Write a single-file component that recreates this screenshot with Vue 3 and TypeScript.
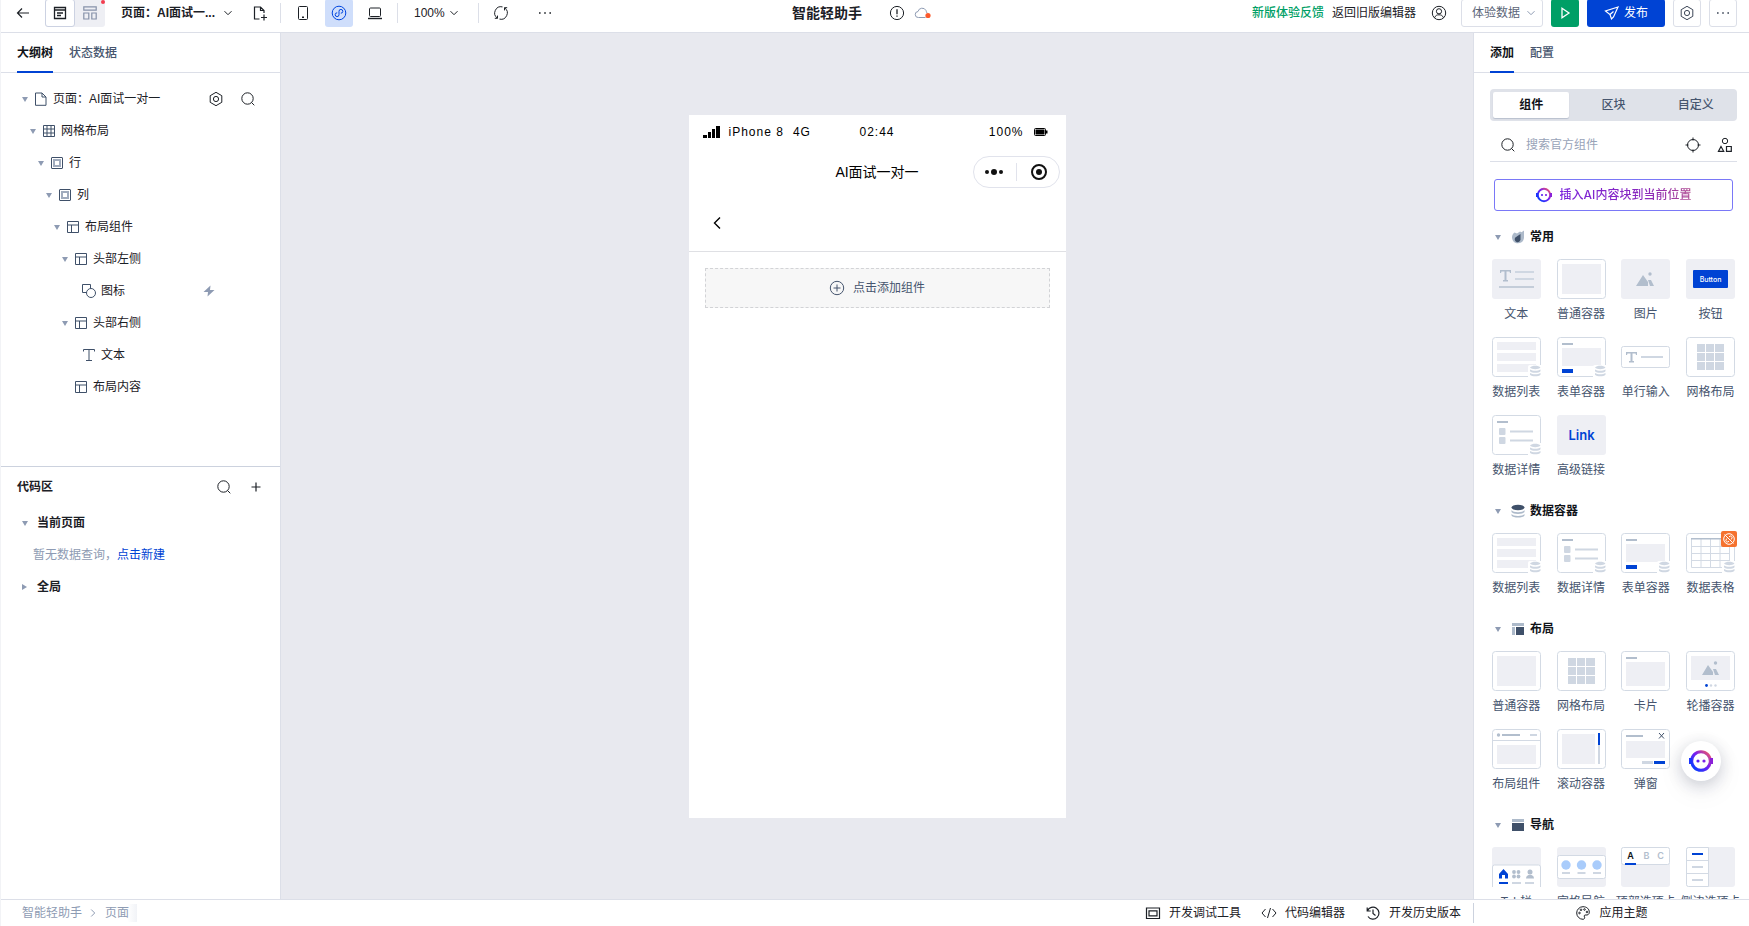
<script setup lang="ts">
import { ref } from 'vue'

interface TreeNode {
  label: string
  depth: number
  icon: string
  open: boolean
  event?: boolean
}

interface Item {
  label: string
  kind: string
  db?: boolean
  badge?: boolean
}

interface Section {
  title: string
  icon: string
  items: Item[]
}

const keyword = ref('')

const tree: TreeNode[] = [
  { label: '页面：AI面试一对一', depth: 0, icon: 'file', open: true },
  { label: '网格布局', depth: 1, icon: 'grid', open: true },
  { label: '行', depth: 2, icon: 'box', open: true },
  { label: '列', depth: 3, icon: 'box', open: true },
  { label: '布局组件', depth: 4, icon: 'layout', open: true },
  { label: '头部左侧', depth: 5, icon: 'layout', open: true },
  { label: '图标', depth: 6, icon: 'shape', open: false, event: true },
  { label: '头部右侧', depth: 5, icon: 'layout', open: true },
  { label: '文本', depth: 6, icon: 'text', open: false },
  { label: '布局内容', depth: 5, icon: 'layout', open: false },
]

const sections: Section[] = [
  {
    title: '常用',
    icon: 'drop',
    items: [
      { label: '文本', kind: 'text' },
      { label: '普通容器', kind: 'container' },
      { label: '图片', kind: 'image' },
      { label: '按钮', kind: 'button' },
      { label: '数据列表', kind: 'list', db: true },
      { label: '表单容器', kind: 'form', db: true },
      { label: '单行输入', kind: 'input' },
      { label: '网格布局', kind: 'grid' },
      { label: '数据详情', kind: 'detail', db: true },
      { label: '高级链接', kind: 'link' },
    ],
  },
  {
    title: '数据容器',
    icon: 'data',
    items: [
      { label: '数据列表', kind: 'list', db: true },
      { label: '数据详情', kind: 'detail', db: true },
      { label: '表单容器', kind: 'form', db: true },
      { label: '数据表格', kind: 'table', db: true, badge: true },
    ],
  },
  {
    title: '布局',
    icon: 'layout',
    items: [
      { label: '普通容器', kind: 'container' },
      { label: '网格布局', kind: 'grid' },
      { label: '卡片', kind: 'card' },
      { label: '轮播容器', kind: 'carousel' },
      { label: '布局组件', kind: 'header' },
      { label: '滚动容器', kind: 'scroll' },
      { label: '弹窗', kind: 'modal' },
    ],
  },
  {
    title: '导航',
    icon: 'nav',
    items: [
      { label: 'Tab栏', kind: 'tabbar' },
      { label: '宫格导航', kind: 'gridnav' },
      { label: '顶部选项卡', kind: 'toptab' },
      { label: '侧边选项卡', kind: 'sidetab' },
    ],
  },
]

const plainKinds = ['text', 'image', 'button', 'input', 'link', 'tabbar', 'gridnav', 'toptab', 'sidetab']
const filledKinds = ['text', 'image', 'button', 'link', 'tabbar', 'gridnav', 'toptab', 'sidetab']
const three = [0, 1, 2]
</script>

<template>
  <div class="app">
    <svg class="defs" aria-hidden="true">
      <defs>
        <linearGradient id="brand" x1="0" y1="1" x2="1" y2="0">
          <stop offset="0.15" stop-color="#0a3cff" />
          <stop offset="0.55" stop-color="#7a1ff0" />
          <stop offset="0.85" stop-color="#e0507a" />
        </linearGradient>
        <symbol id="search" viewBox="0 0 16 16">
          <circle cx="7.5" cy="7.5" r="5.7" /><path d="M11.5 11.5 14.300 14.300" />
        </symbol>
        <symbol id="gear" viewBox="0 0 16 16">
          <path d="M8 1.300 13.800 4.700V11.300L8 14.700 2.200 11.300V4.700Z" /><circle cx="8" cy="8" r="2.6" />
        </symbol>
        <symbol id="dots" viewBox="0 0 16 16">
          <path d="M2 7.200h1.600v1.600H2zM7.200 7.200h1.600v1.600H7.200zM12.400 7.200H14v1.600h-1.600z" fill="currentColor" stroke="none" />
        </symbol>
        <symbol id="chevron" viewBox="0 0 10 10"><path d="M1.500 3.200 5 6.700 8.500 3.200" /></symbol>
        <symbol id="robot" viewBox="0 0 24 24">
          <path d="M12 1.200A10.800 10.800 0 1 0 12 22.800 10.800 10.800 0 0 0 12 1.200ZM12 4.200A7.800 7.800 0 1 1 12 19.800 7.800 7.800 0 0 1 12 4.200Z" fill="url(#brand)" fill-rule="evenodd" stroke="none" />
          <path d="M0 9h3v6H0z" fill="#1a35ff" stroke="none" /><path d="M21 9h3v6h-3z" fill="#8a20d8" stroke="none" />
          <circle cx="9" cy="12" r="1.600" fill="#5a20f0" stroke="none" /><circle cx="15" cy="12" r="1.600" fill="#7a20e8" stroke="none" />
        </symbol>
      </defs>
    </svg>

    <header class="topbar">
      <div class="top-left">
        <button class="icon-btn back" aria-label="返回"><svg class="i16" viewBox="0 0 16 16"><path d="M14 8H2.500M7 3.500 2.500 8 7 12.500" stroke-width="1.200" /></svg></button>
        <div class="toggle">
          <button class="on" aria-label="编辑"><svg class="i16" viewBox="0 0 16 16"><path d="M2.500 2.500h11v11h-11zM2.500 5h11M5 8h6M5 10.500h4" stroke-width="1.300" /></svg></button>
          <button aria-label="布局"><svg class="i16" viewBox="0 0 16 16"><path d="M1.800 1.800h12.400v3.400H1.800zM1.800 8h5v6h-5zM9.800 8h4.400v6H9.800z" stroke-width="1.200" /></svg></button>
          <i class="red-dot"></i>
        </div>
        <button class="page-name">页面：AI面试一...<svg class="i10" ><use href="#chevron" /></svg></button>
        <button class="icon-btn newfile" aria-label="新建页面"><svg class="i16" viewBox="0 0 16 16"><path d="M7.500 14H2.500V2h6l3.500 3.500V8M8.500 2v3.500H12M12 9.500v6M9 12.500h6" stroke-width="1.200" /></svg></button>
        <i class="vsep"></i>
        <div class="devices">
          <button aria-label="手机"><svg class="i16" viewBox="0 0 16 16"><rect x="3.500" y="1.500" width="9" height="13" rx="1" /><path d="M7 12.300h2" stroke-width="1.400" /></svg></button>
          <button class="on" aria-label="小程序"><svg class="i16" viewBox="0 0 16 16"><circle cx="8" cy="8" r="6.800" /><path d="M6.200 7.800A1.900 1.900 0 1 0 8 9.700V6.300A1.900 1.900 0 1 1 9.800 8.200" /></svg></button>
          <button aria-label="电脑"><svg class="i16" viewBox="0 0 16 16"><rect x="2.500" y="3" width="11" height="8.500" rx="1" /><path d="M1 13.500h14" stroke-width="1.400" /></svg></button>
        </div>
        <i class="vsep"></i>
        <label class="zoom"><select aria-label="缩放"><option>100%</option></select><svg class="i10"><use href="#chevron" /></svg></label>
        <i class="vsep"></i>
        <button class="icon-btn refresh" aria-label="刷新"><svg class="i16" viewBox="0 0 16 16"><path d="M4.300 13.100A6.300 6.300 0 0 1 9.500 1.900M11.700 2.900A6.300 6.300 0 0 1 6.500 14.100M1.800 13.300h2.700v-2.700M14.200 2.700h-2.700v2.700" /></svg></button>
        <button class="icon-btn" aria-label="更多"><svg class="i16"><use href="#dots" /></svg></button>
      </div>

      <div class="top-mid">
        <h1>智能轻助手</h1>
        <svg class="i16" viewBox="0 0 16 16"><circle cx="8" cy="8" r="6.600" /><path d="M8 4.300v4.900M8 10.500v1.300" stroke-width="1.300" /></svg>
        <svg class="cloud" viewBox="0 0 18 16"><path d="M11.500 12.500H4.500a3 3 0 0 1-.5-6A4.300 4.300 0 0 1 12 5.500c.4 1 .4 1.500 1 2.500" /><circle cx="14" cy="10.500" r="2.600" class="dot" /></svg>
      </div>

      <div class="top-right">
        <a href="#" class="green">新版体验反馈</a>
        <a href="#" class="old">返回旧版编辑器</a>
        <svg class="i16 user" viewBox="0 0 16 16"><circle cx="8" cy="8" r="6.700" /><circle cx="8" cy="6.300" r="2.600" /><path d="M3.500 12.800C4.500 10.300 6 9.800 8 9.800s3.500.5 4.500 3" /></svg>
        <label class="data-select"><select aria-label="数据"><option>体验数据</option></select><svg class="i10"><use href="#chevron" /></svg></label>
        <button class="play" aria-label="预览"><svg class="i16" viewBox="0 0 16 16"><path d="M5 3.200 12 8 5 12.800Z" stroke-width="1.300" /></svg></button>
        <button class="publish"><svg class="i16" viewBox="0 0 16 16"><path d="M14 2 1.500 6 6 9.500 7.500 14 9.500 12 14 2ZM6 9.500 9.500 6.500" stroke-width="1.200" /></svg>发布</button>
        <button class="square" aria-label="设置"><svg class="i16"><use href="#gear" /></svg></button>
        <button class="square" aria-label="更多操作"><svg class="i16"><use href="#dots" /></svg></button>
      </div>
    </header>

    <main class="body">
      <aside class="left">
        <nav class="tabs"><button class="active">大纲树</button><button>状态数据</button></nav>
        <div class="outline">
          <ul>
            <li v-for="(n, k) in tree" :key="k" :style="{ paddingLeft: 20 + n.depth * 8 + 'px' }">
              <i class="caret" :class="{ none: !n.open }"></i>
              <svg class="i14" viewBox="0 0 14 14">
                <path v-if="n.icon === 'file'" d="M1.500 1H8l4 4v8.300H1.500zM8 1v4h4" />
                <path v-else-if="n.icon === 'grid'" d="M1.500 1.500h11v11h-11zM1.500 5h11M1.500 9h11M5 1.500v11M9 1.500v11" />
                <template v-else-if="n.icon === 'box'"><rect x="1.500" y="1.500" width="11" height="11" rx="0.500" /><rect x="4" y="4" width="6" height="6" class="soft" /></template>
                <path v-else-if="n.icon === 'layout'" d="M1.500 1.500h11v11h-11zM1.500 5h11M5.500 5v7.500" />
                <template v-else-if="n.icon === 'shape'"><path d="M4.500 8.500H.5v-8h8v4" /><circle cx="9" cy="9" r="4.500" /></template>
                <path v-else d="M1.500 3.500v-2h11v2M7 1.500v11M4 12.500h6" />
              </svg>
              <span>{{ n.label }}</span>
              <div v-if="k === 0" class="tools">
                <button aria-label="页面设置"><svg class="i16"><use href="#gear" /></svg></button>
                <button aria-label="搜索大纲"><svg class="i16"><use href="#search" /></svg></button>
              </div>
              <svg v-if="n.event" class="bolt" viewBox="0 0 12 12"><path d="M7.500.5.5 7H5L4.500 11.500 11.500 5H7Z" /></svg>
            </li>
          </ul>
        </div>
        <section class="code">
          <div class="code-head">
            <h2>代码区</h2>
            <div class="tools">
              <button aria-label="搜索代码"><svg class="i16"><use href="#search" /></svg></button>
              <button aria-label="新建代码"><svg class="i16" viewBox="0 0 16 16"><path d="M8 3.500v9M3.500 8h9" stroke-width="1.200" /></svg></button>
            </div>
          </div>
          <div class="code-row"><i class="caret"></i><strong>当前页面</strong></div>
          <p>暂无数据查询，<a href="#">点击新建</a></p>
          <div class="code-row"><i class="caret closed"></i><strong>全局</strong></div>
        </section>
      </aside>

      <section class="canvas">
        <div class="phone">
          <div class="status">
            <div class="carrier">
              <svg class="signal" viewBox="0 0 17 12"><path d="M0 9h4v3H0zM5 6h3v6H5zM9 3h3v9H9zM13 0h4v12h-4z" /></svg>
              <span>iPhone 8</span><span>4G</span>
            </div>
            <span>02:44</span>
            <div class="power"><span>100%</span><svg class="battery" viewBox="0 0 14 8"><rect x="0.500" y="0.500" width="11" height="7" rx="1" fill="none" stroke="#000" /><path d="M1.500 1.500h9v5h-9zM12 2.500h1.500v3H12z" /></svg></div>
          </div>
          <div class="navbar">
            <span></span>
            <h3>AI面试一对一</h3>
            <div class="capsule">
              <svg viewBox="0 0 20 20"><circle cx="3" cy="10" r="2" /><circle cx="10" cy="10" r="3" /><circle cx="17" cy="10" r="2" /></svg>
              <i></i>
              <svg viewBox="0 0 20 20"><circle cx="10" cy="10" r="7" fill="none" stroke="#111" stroke-width="2" /><circle cx="10" cy="10" r="3" /></svg>
            </div>
          </div>
          <div class="page-head"><button aria-label="后退"><svg class="i16" viewBox="0 0 16 16"><path d="M11 2.500 5.500 8l5.500 5.500" stroke-width="1.400" /></svg></button></div>
          <div class="page-body">
            <button class="add"><svg class="i16" viewBox="0 0 16 16"><circle cx="8" cy="8" r="6.700" /><path d="M8 4.500v7M4.500 8h7" /></svg>点击添加组件</button>
          </div>
        </div>
      </section>

      <aside class="right">
        <nav class="tabs"><button class="active">添加</button><button>配置</button></nav>
        <div class="segment"><button class="on">组件</button><button>区块</button><button>自定义</button></div>
        <div class="search">
          <label for="kw"><svg class="i16"><use href="#search" /></svg></label>
          <input id="kw" v-model="keyword" type="text" placeholder="搜索官方组件" />
          <button aria-label="定位"><svg class="i16" viewBox="0 0 16 16"><circle cx="8" cy="8" r="5.500" /><path d="M8 .5v3M8 12.500v3M.5 8h3M12.500 8h3" /></svg></button>
          <button aria-label="分类"><svg class="i16" viewBox="0 0 16 16"><circle cx="8" cy="4" r="2.700" /><path d="M1.500 14.300 4 9.500l2.700 4.800ZM9.500 9.500h4.800v4.800H9.500z" stroke-width="1.200" /></svg></button>
        </div>
        <button class="ai"><svg class="i16"><use href="#robot" /></svg><span>插入AI内容块到当前位置</span></button>

        <div class="library">
          <section v-for="s in sections" :key="s.title" class="group">
            <h2>
              <i class="caret"></i>
              <svg class="i14" viewBox="0 0 14 14">
                <template v-if="s.icon === 'drop'"><path d="M13 .5v7a6 6 0 1 1-9.500-5L6 3.500 9 1.500 10.500 2.200Z" fill="#adbaca" /><path d="M9.500 4V9.500a2.900 2.900 0 1 1-5.200-2Z" fill="#3f5069" /></template>
                <template v-else-if="s.icon === 'data'"><path d="M.5 6C2 9 12 9 13.500 6v2C12 10.500 2 10.500.5 8zM.5 10C2 12.500 12 12.500 13.500 10v1.500C12 14.200 2 14.200.5 11.500z" fill="#adbaca" /><ellipse cx="7" cy="3.500" rx="6.500" ry="2.800" fill="#3f5069" /></template>
                <template v-else-if="s.icon === 'layout'"><path d="M1 1h12v3H1zM1 5h3v8H1z" fill="#adbaca" /><path d="M5 5h8v8H5z" fill="#3f5069" /></template>
                <template v-else><path d="M1 1h12v3H1z" fill="#adbaca" /><path d="M1 5h12v8H1z" fill="#3f5069" /></template>
              </svg>
              {{ s.title }}
            </h2>
            <div class="items">
              <button v-for="it in s.items" :key="it.label" class="item">
                <span class="thumb">
                  <svg viewBox="0 0 49 40">
                    <rect v-if="filledKinds.includes(it.kind)" width="49" height="40" rx="3" class="pale" />
                    <rect v-if="!plainKinds.includes(it.kind)" x="0.500" y="0.500" width="48" height="39" rx="3" class="frame" />

                    <template v-if="it.kind === 'text'">
                      <path d="M8 14v-3h11v3h-1l-.5-1.500h-3V21H16v1.500h-5V21h1.500v-8.500h-3L9 14z" class="dark" /><path d="M23 12h19v2H23zM23 19h19v2H23z" class="mid" /><path d="M7 27h35v2H7z" class="dark2" />
                    </template>
                    <rect v-else-if="it.kind === 'container'" x="5" y="5" width="39" height="30" class="pale" />
                    <template v-else-if="it.kind === 'image'"><path d="M15 27 22 16l5 7v4zM27 21h3l3 6h-4z" class="dark" /><circle cx="29" cy="15" r="1.700" class="dark" /></template>
                    <template v-else-if="it.kind === 'button'"><rect x="7" y="11" width="35" height="18" rx="1" class="blue" /><text x="24.500" y="23" class="t-button">Button</text></template>
                    <path v-else-if="it.kind === 'list'" d="M5 5h39v8H5zM5 16h39v8H5zM5 27h39v8H5z" class="pale" />
                    <template v-else-if="it.kind === 'form'"><path d="M5 6h11v2H5z" class="dark" /><path d="M5 11h39v18H5z" class="pale" /><path d="M5 32h11v4H5z" class="blue" /></template>
                    <template v-else-if="it.kind === 'input'"><rect x="0.500" y="9.500" width="48" height="21" rx="2" class="frame" /><path d="M5 18v-3h11v3h-1l-.5-1.500h-3V24H13v1.500H8V24h1.500v-7.500h-3L6 18z" class="dark" /><path d="M20 19h22v2H20z" class="mid" /></template>
                    <path v-else-if="it.kind === 'grid'" d="M11 7h8v8h-8zM20 7h8v8h-8zM29 7h9v8h-9zM11 16h8v8h-8zM20 16h8v8h-8zM29 16h9v8h-9zM11 25h8v8h-8zM20 25h8v8h-8zM29 25h9v8h-9z" class="mid" />
                    <template v-else-if="it.kind === 'detail'"><path d="M5 6h11v2H5z" class="dark" /><rect x="7" y="13" width="6.500" height="7" rx="1" class="mid" /><rect x="7" y="22" width="6.500" height="7" rx="1" class="mid" /><path d="M18 15.500h23v2H18zM18 24.500h23v2H18z" class="mid" /></template>
                    <text v-else-if="it.kind === 'link'" x="24.500" y="25" class="t-link">Link</text>
                    <template v-else-if="it.kind === 'table'"><path d="M5.500 5.500h38v29h-38zM5.500 13.500h38M5.500 20.500h38M5.500 27.500h38M15 5.500v29M24.500 5.500v29M34 5.500v29" class="frame" /><path d="M5 5h39v1.500H5z" class="dark" /></template>
                    <template v-else-if="it.kind === 'card'"><path d="M5 6h11v2H5z" class="dark" /><path d="M5 11h39v24H5z" class="pale" /></template>
                    <template v-else-if="it.kind === 'carousel'"><path d="M5 5h39v24H5z" class="pale" /><path d="M16 24 22 14l5 7v3zM27 18h3l3 6h-4z" class="dark" /><circle cx="29.500" cy="12" r="1.700" class="dark" /><circle cx="20.500" cy="34.500" r="1.400" class="blue" /><circle cx="25" cy="34.500" r="1.200" class="mid" /><circle cx="29.500" cy="34.500" r="1.200" class="mid" /></template>
                    <template v-else-if="it.kind === 'header'"><path d="M.5 11.500h48" class="frame" /><circle cx="6.500" cy="6" r="1.700" class="dark" /><path d="M10 5h18v2H10z" class="dark" /><path d="M38 5h7v2h-7z" class="mid" /><path d="M5 16h39v19H5z" class="pale" /></template>
                    <template v-else-if="it.kind === 'scroll'"><path d="M5 5h33v30H5z" class="pale" /><path d="M41 5h2v30h-2z" class="mid" /><path d="M41 4h2v12h-2z" class="blue" /></template>
                    <template v-else-if="it.kind === 'modal'"><path d="M5 6h17v2H5z" class="dark" /><path d="M5 12h39v17H5z" class="pale" /><path d="M38 4l5 5.500M43 4l-5 5.500" class="close" /><path d="M21 32h11v3H21z" class="mid" /><path d="M33 32h11v3H33z" class="blue" /></template>
                    <template v-else-if="it.kind === 'tabbar'">
                      <path d="M.5 40V20a2 2 0 0 1 2-2h44a2 2 0 0 1 2 2v20" class="frame" /><path d="M7 27 11.500 22 16 27v4.500h-3V28h-3v3.500H7z" class="blue" />
                      <circle cx="22" cy="25" r="1.900" class="dark" /><circle cx="26.500" cy="25" r="1.900" class="dark" /><circle cx="22" cy="29.500" r="1.900" class="dark" /><circle cx="26.500" cy="29.500" r="1.900" class="dark" /><circle cx="38" cy="25" r="2.500" class="dark" /><path d="M34 31.500c0-5 8-5 8 0z" class="dark" />
                      <path d="M7 35h9v2H7z" class="blue" /><path d="M20 35h9v2h-9zM33 35h9v2h-9z" class="mid" />
                    </template>
                    <template v-else-if="it.kind === 'gridnav'"><rect x="0.500" y="8.500" width="48" height="23" rx="2" class="frame" /><g v-for="c in three" :key="c"><circle :cx="9 + c * 15.5" cy="18" r="4.700" class="sky" /><rect :x="5 + c * 15.5" y="25" width="8" height="2" class="mid" /></g></template>
                    <template v-else-if="it.kind === 'toptab'"><rect x="0.500" y="0.500" width="48" height="17" rx="2" class="frame" /><text x="9.500" y="12" class="t-tab t-on">A</text><text x="25.500" y="12" class="t-tab">B</text><text x="39.500" y="12" class="t-tab">C</text><path d="M4 16h11v2H4z" class="blue" /></template>
                    <template v-else><path d="M2.500.5h20v39h-20a2 2 0 0 1-2-2v-35a2 2 0 0 1 2-2zM.5 13.500h22M.5 26.500h22" class="frame" /><path d="M6 6h11v2H6z" class="blue" /><path d="M6 19h11v2H6zM6 32h11v2H6z" class="mid" /></template>

                    <template v-if="it.db"><path d="M36 40V30a2 2 0 0 1 2-2h11v12z" fill="#fff" /><path d="M38 30.500c2-2.500 8.500-2.500 10.500 0-2 2.300-8.500 2.300-10.500 0zM38 32.500c2.500 1.800 8 1.800 10.500 0v1.700c-2 2-8.500 2-10.500 0zM38 36c2.500 1.800 8 1.800 10.500 0v1.700c-2 2-8.500 2-10.500 0z" class="mid" /></template>
                  </svg>
                  <svg v-if="it.badge" class="badge" viewBox="0 0 16 16"><rect width="16" height="16" rx="2" /><circle cx="8" cy="8" r="5.300" /><path d="M3.500 3.500 12.500 12.500M8 5.800 9.500 5a1.400 1.400 0 0 1 1.500 2L10.200 8.500M5.800 7.500 5 9a1.400 1.400 0 0 0 1.500 2L8 10.200" /></svg>
                </span>
                <span class="name">{{ it.label }}</span>
              </button>
            </div>
          </section>
        </div>
        <button class="assistant" aria-label="AI 助手"><svg><use href="#robot" /></svg></button>
      </aside>
    </main>

    <footer class="footer">
      <nav class="crumbs"><a href="#">智能轻助手</a><svg class="i10 turn"><use href="#chevron" /></svg><a href="#" class="here">页面</a></nav>
      <div class="dev">
        <button><svg class="i16" viewBox="0 0 16 16"><path d="M1.500 3h13v10.500h-13zM4 5.800h8v5H4z" stroke-width="1.200" /></svg>开发调试工具</button>
        <button><svg class="i16" viewBox="0 0 16 16"><path d="M4.500 4 1 8l3.500 4M11.500 4 15 8l-3.500 4M9.500 3l-3 10" /></svg>代码编辑器</button>
        <button><svg class="i16" viewBox="0 0 16 16"><path d="M2.200 2.500V6h3.500M2.500 5.700A6 6 0 1 1 3 11.500M8 4.500V8.500l2.500 2" stroke-width="1.200" /></svg>开发历史版本</button>
      </div>
      <button class="theme"><svg class="i16" viewBox="0 0 16 16"><path d="M8 1.700c4 0 6.300 2.500 6.300 5.500 0 2.500-2 3-3.300 2.800-1.500-.3-2.300.7-1.500 2 .6 1-.2 2.300-1.500 2.300A6.300 6.300 0 0 1 8 1.700Z" /><circle cx="4.500" cy="8" r="0.800" /><circle cx="6" cy="4.800" r="0.800" /><circle cx="9.500" cy="4.500" r="0.800" /><circle cx="12" cy="7" r="0.800" /></svg>应用主题</button>
    </footer>
  </div>
</template>

<style>
body { overflow: hidden; }
</style>

<style scoped>
.app {
  display: flex;
  flex-direction: column;
  height: 100vh;
  box-sizing: border-box;
  border-left: 1px solid #f2f3f6;
  overflow: hidden;
  font: 12px/16px "Liberation Sans", "Noto Sans CJK SC", sans-serif;
  color: #1c2026;
  background: #fff;
}
.defs { position: absolute; width: 0; height: 0; }
button, select, input { font: inherit; color: inherit; background: none; border: 0; padding: 0; margin: 0; }
button { display: inline-flex; align-items: center; justify-content: center; white-space: nowrap; cursor: pointer; }
select { appearance: none; outline: 0; cursor: pointer; }
a { text-decoration: none; color: inherit; }
h1, h2, h3, p, ul { margin: 0; padding: 0; font-weight: inherit; font-size: inherit; list-style: none; }
svg { flex: none; fill: none; stroke: currentColor; }
.i16 { width: 16px; height: 16px; }
.i14 { width: 14px; height: 14px; }
.i10 { width: 10px; height: 10px; }

/* top bar */
.topbar {
  flex: none;
  display: flex;
  align-items: center;
  height: 33px;
  box-sizing: border-box;
  padding: 0 12px 6px 14px;
  border-bottom: 1px solid #dcdfe8;
}
.top-left, .top-right { flex: 1; display: flex; align-items: center; }
.top-right { justify-content: flex-end; }
.top-mid { display: flex; align-items: center; margin-right: 28px; }
.top-mid h1 { font-size: 14px; line-height: 20px; font-weight: 600; margin-right: 27px; }
.cloud { width: 18px; height: 16px; margin-left: 9px; color: #8e9bb3; }
.cloud .dot { fill: #fb5a2c; stroke: none; }
.icon-btn { width: 16px; height: 28px; }
.toggle { position: relative; display: flex; margin: 0 16px 0 14px; border-radius: 3px; background: #eeeff4; }
.toggle button { width: 30px; height: 28px; box-sizing: border-box; border-radius: 3px; color: #8692a9; }
.toggle .on { background: #fff; border: 1px solid #ccd2e2; color: #1c2026; }
.red-dot { position: absolute; right: 0; top: 1px; width: 4px; height: 4px; border-radius: 50%; background: #f23d4f; }
.page-name { font-weight: 600; gap: 8px; }
.newfile { margin-left: 19px; }
.vsep { width: 1px; height: 20px; background: #dcdfe8; }
.newfile + .vsep { margin-left: 12px; }
.devices { display: flex; gap: 8px; margin: 0 8px; }
.devices button { width: 28px; height: 28px; border-radius: 3px; }
.devices .on { background: #cfdefb; color: #0045e0; }
.zoom { display: flex; align-items: center; gap: 4px; margin: 0 19px 0 16px; }
.refresh { margin: 0 28px 0 14px; }
.green { color: #009f66; font-weight: 500; margin-right: 8px; }
.old { margin-right: 15px; }
.user { margin-right: 14px; }
.data-select { display: flex; align-items: center; gap: 5px; height: 28px; box-sizing: border-box; padding: 0 6px 0 10px; border: 1px solid #dcdfe8; border-radius: 3px; color: #5b6577; }
.data-select svg { color: #8e9bb3; }
.play { width: 28px; height: 28px; margin: 0 8px; border-radius: 3px; background: #009f66; color: #fff; }
.publish { width: 78px; height: 28px; gap: 4px; border-radius: 3px; background: #0043d4; color: #fff; }
.square { width: 28px; height: 28px; box-sizing: border-box; margin-left: 8px; border: 1px solid #dcdfe8; border-radius: 3px; color: #3d4757; }

/* shell */
.body { flex: 1; min-height: 0; display: flex; }
.tabs { display: flex; gap: 16px; flex: none; height: 40px; box-sizing: border-box; padding: 0 16px; border-bottom: 1px solid #dcdfe8; font-weight: 500; color: #46556e; }
.tabs button { height: 40px; box-sizing: border-box; padding-top: 2px; border-bottom: 2px solid transparent; }
.tabs .active { color: #101318; border-bottom-color: #0043d4; font-weight: 600; }
.caret { flex: none; width: 0; height: 0; border: 3px solid transparent; border-top: 5px solid #8e9bb3; border-bottom: 0; }
.caret.none { border-color: transparent; }
.caret.closed { margin-right: 1px; border: 3px solid transparent; border-left: 5px solid #8e9bb3; border-right: 0; }

.left { flex: none; width: 280px; box-sizing: border-box; display: flex; flex-direction: column; border-right: 1px solid #dcdfe8; }
.outline { flex: 383 1 0; padding-top: 10px; border-bottom: 1px solid #ccd2de; overflow: hidden; box-sizing: border-box; }
.outline li { display: flex; align-items: center; height: 32px; padding-right: 24px; gap: 5px; }
.outline li .i14 { color: #3f5069; margin-left: 1px; }
.outline li .soft { stroke: #a0abbd; stroke-width: 2; }
.outline .caret { margin-left: 1px; }
.tools { display: flex; gap: 16px; margin-left: auto; }
.bolt { width: 12px; height: 12px; margin: 0 41px 0 auto; fill: #8e9bb3; stroke: none; }
.code { flex: 428 1 0; padding-top: 4px; overflow: hidden; }
.code-head { display: flex; align-items: center; height: 32px; padding: 0 16px; font-weight: 600; }
.code-row { display: flex; align-items: center; gap: 9px; height: 32px; padding-left: 21px; }
.code-head + .code-row { margin-top: 4px; }
.code-row strong { font-weight: 600; }
.code p { height: 32px; line-height: 32px; padding-left: 32px; color: #8e9bb3; }
.code p a { color: #0043d4; }

/* canvas */
.canvas { flex: 1; min-width: 0; display: flex; align-items: center; justify-content: center; background: #e8e9ef; }
.phone { width: 377px; height: calc(100% - 163px); display: flex; flex-direction: column; background: #fff; color: #000; }
.status { display: grid; grid-template-columns: 1fr auto 1fr; align-items: center; height: 34px; padding: 0 14px; letter-spacing: 1px; }
.carrier { display: flex; align-items: center; gap: 9px; }
.signal { width: 17px; height: 12px; fill: #000; stroke: none; }
.power { display: flex; align-items: center; justify-content: flex-end; gap: 10px; padding-right: 4px; }
.battery { width: 14px; height: 8px; fill: #000; stroke: none; }
.navbar { display: grid; grid-template-columns: 1fr auto 1fr; align-items: center; height: 46px; padding: 0 6px; }
.navbar h3 { font-size: 14px; line-height: 20px; }
.capsule { justify-self: end; display: flex; align-items: center; justify-content: space-between; width: 87px; height: 32px; box-sizing: border-box; padding: 0 10px; border: 1px solid #e1e3ec; border-radius: 16px; }
.capsule svg { width: 20px; height: 20px; fill: #111; stroke: none; }
.capsule i { width: 1px; height: 18px; background: #e1e3ec; }
.page-head { display: flex; align-items: center; height: 56px; padding-left: 20px; border-bottom: 1px solid #dfe0e4; }
.page-body { padding: 16px; }
.add { width: 100%; height: 40px; gap: 8px; background: #f7f7f7; border: 1px dashed #d2d3d6; color: #46556e; }

/* component library */
.right { position: relative; flex: none; width: 276px; box-sizing: border-box; display: flex; flex-direction: column; border-left: 1px solid #dcdfe8; }
.segment { flex: none; display: flex; gap: 6px; height: 32px; box-sizing: border-box; margin: 16px 12px 8px 16px; padding: 3px; border-radius: 4px; background: #dfe2e9; font-weight: 500; color: #46556e; }
.segment button { flex: 1; border-radius: 2px; }
.segment .on { background: #fff; color: #101318; box-shadow: 0 1px 1px #b9c0ce; font-weight: 600; }
.search { flex: none; display: flex; align-items: center; height: 32px; margin: 0 12px 0 16px; padding: 0 4px 0 10px; border-bottom: 1px solid #dcdfe8; }
.search label { display: flex; }
.search input { flex: 1; min-width: 0; margin-left: 10px; height: 24px; outline: 0; }
.search input::placeholder { color: #98a3b8; opacity: 1; }
.search button + button { margin-left: 16px; }
.ai { flex: none; height: 32px; margin: 17px 16px 10px 20px; gap: 8px; border: 1px solid #7a78f7; border-radius: 3px; font-weight: 500; }
.ai span { font-family: Inter, "Noto Sans CJK SC", sans-serif; color: transparent; background: linear-gradient(80deg, #7a22dc, #8a28bd 65%, #b04a90); background-clip: text; -webkit-background-clip: text; }
.library { flex: 1; min-height: 0; overflow: hidden; padding: 0 6px 0 10px; }
.group { margin-bottom: 2px; }
.group h2 { display: flex; align-items: center; height: 32px; padding-left: 11px; font-weight: 600; color: #101318; }
.group h2 .i14 { margin: 0 5px 0 10px; stroke: none; }
.items { display: grid; grid-template-columns: repeat(4, 1fr); grid-auto-rows: 78px; margin-top: 6px; }
.item { flex-direction: column; justify-content: flex-start; color: #46556e; min-width: 0; }
.thumb { position: relative; display: block; width: 49px; height: 40px; }
.thumb > svg { display: block; width: 49px; height: 40px; stroke: none; }
.name { margin-top: 6px; line-height: 18px; }
.frame { fill: #fff; stroke: #d3dae4; }
.pale { fill: #eeeff4; }
.mid { fill: #cfd7e2; }
.dark { fill: #b2becd; }
.dark2 { fill: #c4cdd9; }
.blue { fill: #0043d4; }
.sky { fill: #a9ccfb; }
.close { stroke: #3f5069; }
.t-button { font: 500 7px Inter, sans-serif; fill: #fff; text-anchor: middle; }
.t-link { font: 600 13px Inter, sans-serif; fill: #0043d4; text-anchor: middle; }
.t-tab { font: 600 9px Inter, sans-serif; fill: #b2becd; text-anchor: middle; }
.t-tab.t-on { fill: #101318; }
.thumb > .badge { position: absolute; right: -2px; top: -2px; width: 16px; height: 16px; fill: none; stroke: #fff; }
.badge rect { fill: #f5722f; stroke: none; }
.assistant { position: absolute; right: 28px; bottom: 118px; width: 40px; height: 40px; border-radius: 50%; background: #fff; box-shadow: 0 4px 16px rgba(20, 30, 60, 0.2), 0 10px 30px rgba(20, 30, 60, 0.06); }
.assistant svg { width: 24px; height: 24px; }

/* footer */
.footer { flex: none; display: flex; align-items: center; height: 27px; box-sizing: border-box; border-top: 1px solid #dcdfe8; }
.footer button { gap: 8px; }
.crumbs { flex: 1; display: flex; align-items: center; padding-left: 21px; color: #8e9bb3; }
.turn { transform: rotate(-90deg); margin: 0 7px 0 6px; }
.here { padding-right: 8px; line-height: 18px; background: linear-gradient(90deg, #fff 70%, #f1f3f7); }
.dev { display: flex; gap: 20px; padding-right: 12px; }
.footer .theme { width: 276px; height: 20px; box-sizing: border-box; border-left: 1px solid #ccd2de; }
</style>
